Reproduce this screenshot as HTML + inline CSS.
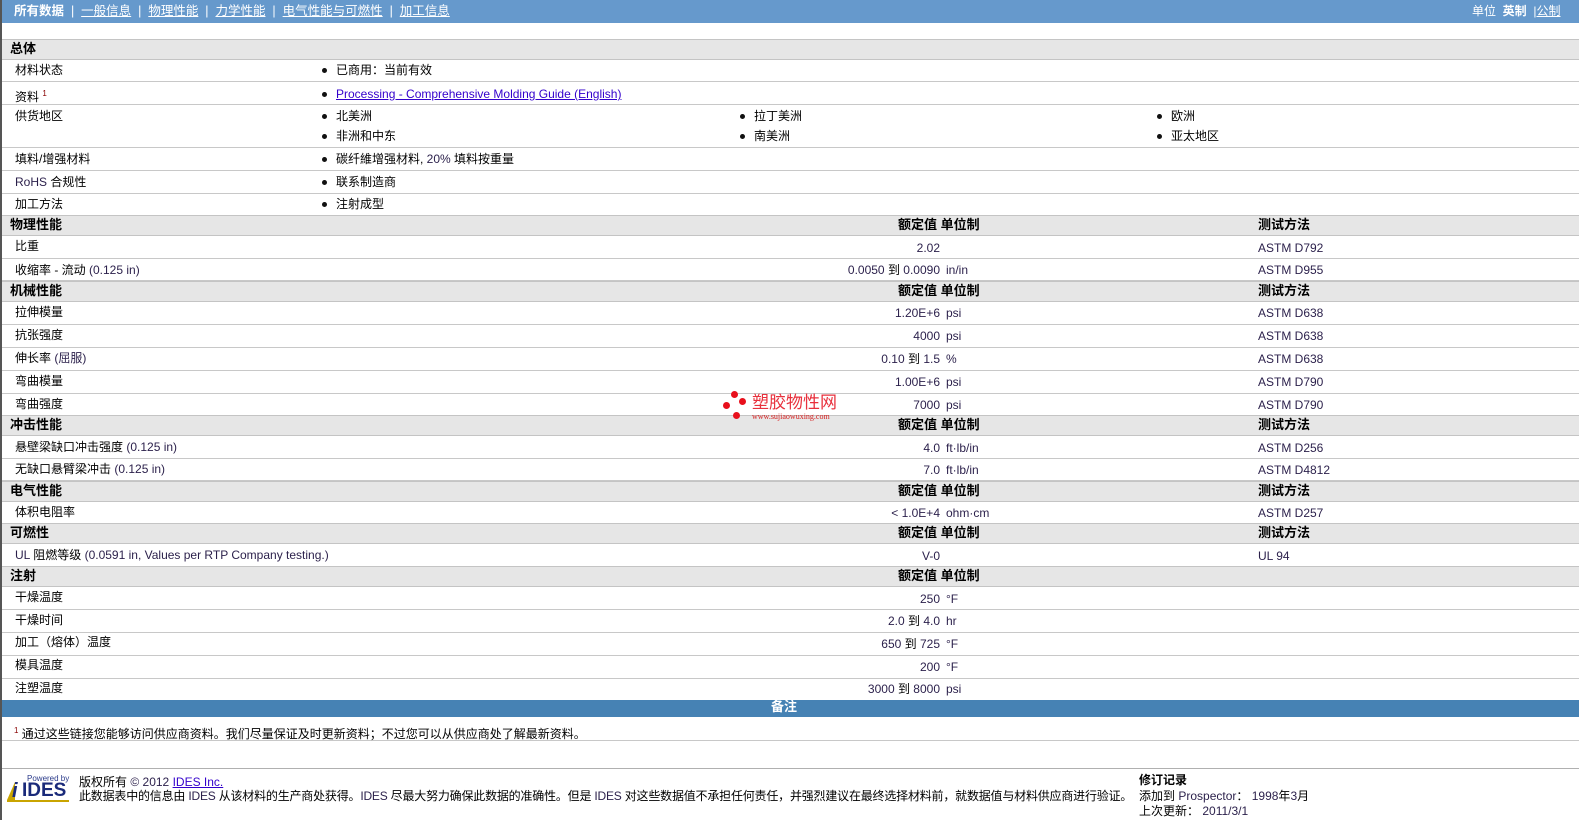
<!DOCTYPE html>
<html><head><meta charset="utf-8">
<style>
*{margin:0;padding:0;box-sizing:border-box}
body{width:1579px;height:820px;overflow:hidden;background:#fff;font-family:"Liberation Sans","Noto Sans CJK SC",sans-serif;font-size:12px;color:#000;position:relative}
.a{position:absolute;white-space:nowrap;line-height:14px}
.bar{position:absolute;left:0;width:1579px}
.sec{background:#e6e6e6;border-top:1px solid #c4c4c4;border-bottom:1px solid #c4c4c4}
.row{border-bottom:1px solid #c8c8c8}
.b{font-weight:bold;font-size:13px}
.v{color:#2a1f4a}
.dot{position:absolute;width:5px;height:5px;border-radius:50%;background:#111}
a{color:#3300cc}
.nav a{color:#fff}
</style></head><body>
<div style="position:absolute;left:0;top:0;width:2px;height:820px;background:#555;z-index:5"></div>
<div class="bar" style="top:0;height:23px;background:#6699cc"></div>
<div class="a nav" style="left:14px;top:4px;color:#fff;font-size:12.5px"><b>所有数据</b> &nbsp;| &nbsp;<a href="#">一般信息</a> &nbsp;| &nbsp;<a href="#">物理性能</a> &nbsp;| &nbsp;<a href="#">力学性能</a> &nbsp;| &nbsp;<a href="#">电气性能与可燃性</a> &nbsp;| &nbsp;<a href="#">加工信息</a></div>
<div class="a nav" style="left:1472px;top:4px;color:#fff">单位 &nbsp;<b>英制</b> &nbsp;|<a href="#">公制</a></div>

<div class="bar sec" style="top:39px;height:21px"></div><div class="a b" style="left:10px;top:42px">总体</div>
<div class="bar row" style="top:60px;height:22px"></div>
<div class="a" style="left:15px;top:63px">材料状态</div><div class="dot" style="left:322px;top:68px"></div><div class="a" style="left:336px;top:63px">已商用：当前有效</div>
<div class="bar row" style="top:82px;height:23px"></div>
<div class="a" style="left:15px;top:87px">资料 <sup style="font-size:8px;color:#800">1</sup></div><div class="dot" style="left:322px;top:92px"></div><div class="a" style="left:336px;top:87px"><a href="#">Processing - Comprehensive Molding Guide (English)</a></div>
<div class="bar row" style="top:105px;height:43px"></div>
<div class="a" style="left:15px;top:109px">供货地区</div>
<div class="dot" style="left:322px;top:114px"></div><div class="a" style="left:336px;top:109px">北美洲</div>
<div class="dot" style="left:322px;top:134px"></div><div class="a" style="left:336px;top:129px">非洲和中东</div>
<div class="dot" style="left:740px;top:114px"></div><div class="a" style="left:754px;top:109px">拉丁美洲</div>
<div class="dot" style="left:740px;top:134px"></div><div class="a" style="left:754px;top:129px">南美洲</div>
<div class="dot" style="left:1157px;top:114px"></div><div class="a" style="left:1171px;top:109px">欧洲</div>
<div class="dot" style="left:1157px;top:134px"></div><div class="a" style="left:1171px;top:129px">亚太地区</div>
<div class="bar row" style="top:148px;height:23px"></div>
<div class="a" style="left:15px;top:152px">填料/增强材料</div><div class="dot" style="left:322px;top:157px"></div><div class="a" style="left:336px;top:152px">碳纤維增强材料, <span class="v">20%</span> 填料按重量</div>
<div class="bar row" style="top:171px;height:23px"></div>
<div class="a" style="left:15px;top:175px"><span class="v">RoHS</span> 合规性</div><div class="dot" style="left:322px;top:180px"></div><div class="a" style="left:336px;top:175px">联系制造商</div>
<div class="bar row" style="top:194px;height:22px"></div>
<div class="a" style="left:15px;top:197px">加工方法</div><div class="dot" style="left:322px;top:202px"></div><div class="a" style="left:336px;top:197px">注射成型</div>

<div class="bar sec" style="top:215px;height:21px"></div><div class="a b" style="left:898px;top:218px">额定值 单位制</div><div class="a b" style="left:10px;top:218px">物理性能</div><div class="a b" style="left:1258px;top:218px">测试方法</div>
<div class="bar row" style="top:236px;height:23px"></div><div class="a" style="left:15px;top:239px">比重</div><div class="a v" style="right:639px;top:241px">2.02</div><div class="a v" style="left:1258px;top:241px">ASTM D792</div>
<div class="bar row" style="top:259px;height:22px"></div><div class="a" style="left:15px;top:263px">收缩率 - 流动 <span class="v">(0.125 in)</span></div><div class="a v" style="right:639px;top:263px">0.0050 <span style="color:#000">到</span> 0.0090</div><div class="a v" style="left:946px;top:263px">in/in</div><div class="a v" style="left:1258px;top:263px">ASTM D955</div>

<div class="bar sec" style="top:281px;height:21px"></div><div class="a b" style="left:10px;top:284px">机械性能</div><div class="a b" style="left:898px;top:284px">额定值 单位制</div><div class="a b" style="left:1258px;top:284px">测试方法</div>
<div class="bar row" style="top:302px;height:23px"></div><div class="a" style="left:15px;top:305px">拉伸模量</div><div class="a v" style="right:639px;top:306px">1.20E+6</div><div class="a v" style="left:946px;top:306px">psi</div><div class="a v" style="left:1258px;top:306px">ASTM D638</div>
<div class="bar row" style="top:325px;height:23px"></div><div class="a" style="left:15px;top:328px">抗张强度</div><div class="a v" style="right:639px;top:329px">4000</div><div class="a v" style="left:946px;top:329px">psi</div><div class="a v" style="left:1258px;top:329px">ASTM D638</div>
<div class="bar row" style="top:348px;height:23px"></div><div class="a" style="left:15px;top:351px">伸长率 <span class="v">(屈服)</span></div><div class="a v" style="right:639px;top:352px">0.10 <span style="color:#000">到</span> 1.5</div><div class="a v" style="left:946px;top:352px">%</div><div class="a v" style="left:1258px;top:352px">ASTM D638</div>
<div class="bar row" style="top:371px;height:23px"></div><div class="a" style="left:15px;top:374px">弯曲模量</div><div class="a v" style="right:639px;top:375px">1.00E+6</div><div class="a v" style="left:946px;top:375px">psi</div><div class="a v" style="left:1258px;top:375px">ASTM D790</div>
<div class="bar row" style="top:394px;height:22px"></div><div class="a" style="left:15px;top:397px">弯曲强度</div><div class="a v" style="right:639px;top:398px">7000</div><div class="a v" style="left:946px;top:398px">psi</div><div class="a v" style="left:1258px;top:398px">ASTM D790</div>

<div class="bar sec" style="top:415px;height:21px"></div><div class="a b" style="left:10px;top:418px">冲击性能</div><div class="a b" style="left:898px;top:418px">额定值 单位制</div><div class="a b" style="left:1258px;top:418px">测试方法</div>
<div class="bar row" style="top:436px;height:23px"></div><div class="a" style="left:15px;top:440px">悬壁梁缺口冲击强度 <span class="v">(0.125 in)</span></div><div class="a v" style="right:639px;top:441px">4.0</div><div class="a v" style="left:946px;top:441px">ft·lb/in</div><div class="a v" style="left:1258px;top:441px">ASTM D256</div>
<div class="bar row" style="top:459px;height:22px"></div><div class="a" style="left:15px;top:462px">无缺口悬臂梁冲击 <span class="v">(0.125 in)</span></div><div class="a v" style="right:639px;top:463px">7.0</div><div class="a v" style="left:946px;top:463px">ft·lb/in</div><div class="a v" style="left:1258px;top:463px">ASTM D4812</div>

<div class="bar sec" style="top:481px;height:21px"></div><div class="a b" style="left:10px;top:484px">电气性能</div><div class="a b" style="left:898px;top:484px">额定值 单位制</div><div class="a b" style="left:1258px;top:484px">测试方法</div>
<div class="bar row" style="top:502px;height:22px"></div><div class="a" style="left:15px;top:505px">体积电阻率</div><div class="a v" style="right:639px;top:506px">&lt; 1.0E+4</div><div class="a v" style="left:946px;top:506px">ohm·cm</div><div class="a v" style="left:1258px;top:506px">ASTM D257</div>

<div class="bar sec" style="top:523px;height:21px"></div><div class="a b" style="left:10px;top:526px">可燃性</div><div class="a b" style="left:898px;top:526px">额定值 单位制</div><div class="a b" style="left:1258px;top:526px">测试方法</div>
<div class="bar row" style="top:544px;height:23px"></div><div class="a" style="left:15px;top:548px"><span class="v">UL</span> 阻燃等级 <span class="v">(0.0591 in, Values per RTP Company testing.)</span></div><div class="a v" style="right:639px;top:549px">V-0</div><div class="a v" style="left:1258px;top:549px">UL 94</div>

<div class="bar sec" style="top:566px;height:21px"></div><div class="a b" style="left:10px;top:569px">注射</div><div class="a b" style="left:898px;top:569px">额定值 单位制</div>
<div class="bar row" style="top:587px;height:23px"></div><div class="a" style="left:15px;top:590px">干燥温度</div><div class="a v" style="right:639px;top:592px">250</div><div class="a v" style="left:946px;top:592px">°F</div>
<div class="bar row" style="top:610px;height:23px"></div><div class="a" style="left:15px;top:613px">干燥时间</div><div class="a v" style="right:639px;top:614px">2.0 <span style="color:#000">到</span> 4.0</div><div class="a v" style="left:946px;top:614px">hr</div>
<div class="bar row" style="top:633px;height:23px"></div><div class="a" style="left:15px;top:635px">加工（熔体）温度</div><div class="a v" style="right:639px;top:637px">650 <span style="color:#000">到</span> 725</div><div class="a v" style="left:946px;top:637px">°F</div>
<div class="bar row" style="top:656px;height:23px"></div><div class="a" style="left:15px;top:658px">模具温度</div><div class="a v" style="right:639px;top:660px">200</div><div class="a v" style="left:946px;top:660px">°F</div>
<div class="bar" style="top:679px;height:21px"></div><div class="a" style="left:15px;top:681px">注塑温度</div><div class="a v" style="right:639px;top:682px">3000 <span style="color:#000">到</span> 8000</div><div class="a v" style="left:946px;top:682px">psi</div>

<div class="bar" style="top:700px;height:17px;background:#4682b4"></div><div class="a b" style="left:771px;top:700px;color:#fff">备注</div>
<div class="bar" style="top:740px;height:1px;background:#c8c8c8"></div>
<div class="a" style="left:14px;top:724px"><sup style="font-size:8px;color:#800">1</sup> 通过这些链接您能够访问供应商资料。我们尽量保证及时更新资料；不过您可以从供应商处了解最新资料。</div>
<div class="bar" style="top:768px;height:1px;background:#b0b0b0"></div>

<div style="position:absolute;left:731px;top:391px;width:7px;height:7px;border-radius:50%;background:#e8101c"></div>
<div style="position:absolute;left:739px;top:398px;width:7px;height:7px;border-radius:50%;background:#e8101c"></div>
<div style="position:absolute;left:723px;top:402px;width:7px;height:7px;border-radius:50%;background:#e8101c"></div>
<div style="position:absolute;left:733px;top:412px;width:7px;height:7px;border-radius:50%;background:#e8101c"></div>
<div class="a" style="left:752px;top:394px;font-size:17px;line-height:18px;color:#e8303c">塑胶物性网</div>
<div class="a" style="left:752px;top:412px;font-size:8px;line-height:9px;color:#d82020;font-family:'Liberation Serif',serif">www.sujiaowuxing.com</div>

<div style="position:absolute;left:7px;top:774px;width:62px;height:28px">
<div class="a" style="left:20px;top:0;font-size:8px;line-height:9px;color:#2a3a8a">Powered by</div>
<div style="position:absolute;left:0;top:8px;width:0;height:0;border-left:8px solid transparent;border-bottom:18px solid #c9a400"></div>
<div class="a" style="left:5px;top:7px;font-size:20px;line-height:20px;font-weight:bold;color:#1a2a7a;font-style:italic">i</div>
<div class="a" style="left:15px;top:7px;font-size:19px;line-height:20px;font-weight:bold;color:#1a2a7a">IDES</div>
<div style="position:absolute;left:0;top:26px;width:62px;height:2px;background:#c9a400"></div>
</div>
<div class="a" style="left:79px;top:775px">版权所有 <span class="v">© 2012</span> <a href="#">IDES Inc.</a></div>
<div class="a" style="left:79px;top:789px;letter-spacing:-0.2px">此数据表中的信息由 <span class="v">IDES</span> 从该材料的生产商处获得。<span class="v">IDES</span> 尽最大努力确保此数据的准确性。但是 <span class="v">IDES</span> 对这些数据值不承担任何责任，并强烈建议在最终选择材料前，就数据值与材料供应商进行验证。</div>
<div class="a b" style="left:1139px;top:773px;font-size:12px">修订记录</div>
<div class="a" style="left:1139px;top:789px">添加到 <span class="v">Prospector</span>： <span class="v">1998</span>年<span class="v">3</span>月</div>
<div class="a" style="left:1139px;top:804px">上次更新： <span class="v">2011/3/1</span></div>
</body></html>
